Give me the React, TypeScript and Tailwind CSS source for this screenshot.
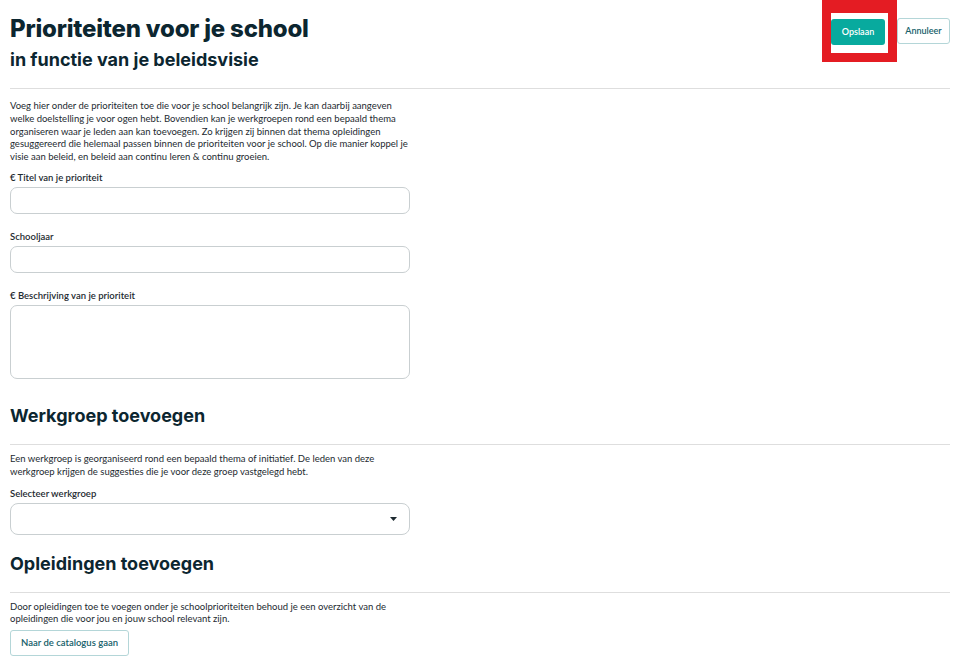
import React from 'react';

const body = { fontFamily: 'Lato, "Noto Sans", sans-serif' };
const head = { fontFamily: 'Inter, "Noto Sans", sans-serif' };

function Field({ label, tall, first }: { label: string; tall?: boolean; first?: boolean }) {
  return (
    <div className={first ? 'mt-[7px]' : 'mt-[16px]'}>
      <label className="block text-[9.5px] leading-[13px] font-semibold text-[#1d2a30] mb-[3px]">{label}</label>
      {tall ? (
        <textarea className="block w-full h-[74px] border border-[#c9cfd1] rounded-[7px] resize-none outline-none" />
      ) : (
        <input className="block w-full h-[27px] border border-[#c9cfd1] rounded-[7px] outline-none" />
      )}
    </div>
  );
}

export default function App() {
  return (
    <div className="min-h-screen bg-white pl-[10px] pr-[11px] text-[#1d2a30]" style={body}>
      {/* header */}
      <div className="flex justify-between items-start">
        <div style={head} className="text-[#0c2630]">
          <h1 className="mt-[14px] text-[24px] leading-[30px] font-extrabold tracking-[-0.2px]">Prioriteiten voor je school</h1>
          <h2 className="mt-[4px] text-[18px] leading-[24px] font-bold">in functie van je beleidsvisie</h2>
        </div>
        <div className="mt-[17px] flex items-center gap-[12px]">
          <div className="relative">
            <button className="h-[26px] w-[54px] rounded-[3px] bg-[#08aa9e] text-white text-[9px] font-semibold">Opslaan</button>
            <div className="absolute left-[-9px] right-[-12px] top-[-17px] bottom-[-17px] border-[9px] border-t-[13px] border-[#e41c23] pointer-events-none" />
          </div>
          <button className="h-[26px] w-[53px] rounded-[3px] border border-[#b4d6d8] bg-white text-[#15606a] text-[9px] font-semibold">Annuleer</button>
        </div>
      </div>

      <hr className="mt-[16px] border-t border-[#dedede]" />

      <div className="w-[400px]">
        <p className="mt-[11px] text-[9.5px] leading-[12.8px]">
          Voeg hier onder de prioriteiten toe die voor je school belangrijk zijn. Je kan daarbij aangeven welke doelstelling je voor ogen hebt. Bovendien kan je werkgroepen rond een bepaald thema organiseren waar je leden aan kan toevoegen. Zo krijgen zij binnen dat thema opleidingen gesuggereerd die helemaal passen binnen de prioriteiten voor je school. Op die manier koppel je visie aan beleid, en beleid aan continu leren &amp; continu groeien.
        </p>
        <Field label="€ Titel van je prioriteit" first />
        <Field label="Schooljaar" />
        <Field label="€ Beschrijving van je prioriteit" tall />
      </div>

      <h3 style={head} className="mt-[25px] text-[18px] leading-[24px] font-bold text-[#0c2630]">Werkgroep toevoegen</h3>
      <hr className="mt-[16px] border-t border-[#dedede]" />
      <div className="w-[400px]">
        <p className="mt-[8px] text-[9.5px] leading-[12.8px]">
          Een werkgroep is georganiseerd rond een bepaald thema of initiatief. De leden van deze werkgroep krijgen de suggesties die je voor deze groep vastgelegd hebt.
        </p>
        <label className="block mt-[8px] text-[9.5px] leading-[13px] font-semibold mb-[3px]">Selecteer werkgroep</label>
        <div className="h-[32px] border border-[#c9cfd1] rounded-[8px] flex items-center justify-end pr-[12px]">
          <svg width="7" height="4" viewBox="0 0 7 4"><path d="M0 0h7L3.5 4z" fill="#1d2a30" /></svg>
        </div>
      </div>

      <h3 style={head} className="mt-[17px] text-[18px] leading-[24px] font-bold text-[#0c2630]">Opleidingen toevoegen</h3>
      <hr className="mt-[16px] border-t border-[#dedede]" />
      <div className="w-[400px]">
        <p className="mt-[8px] text-[9.5px] leading-[12.8px]">
          Door opleidingen toe te voegen onder je schoolprioriteiten behoud je een overzicht van de opleidingen die voor jou en jouw school relevant zijn.
        </p>
        <button className="mt-[4px] h-[26px] px-[10px] rounded-[3px] border border-[#b4d6d8] bg-white text-[#15606a] text-[9.5px] font-semibold">Naar de catalogus gaan</button>
      </div>
    </div>
  );
}
